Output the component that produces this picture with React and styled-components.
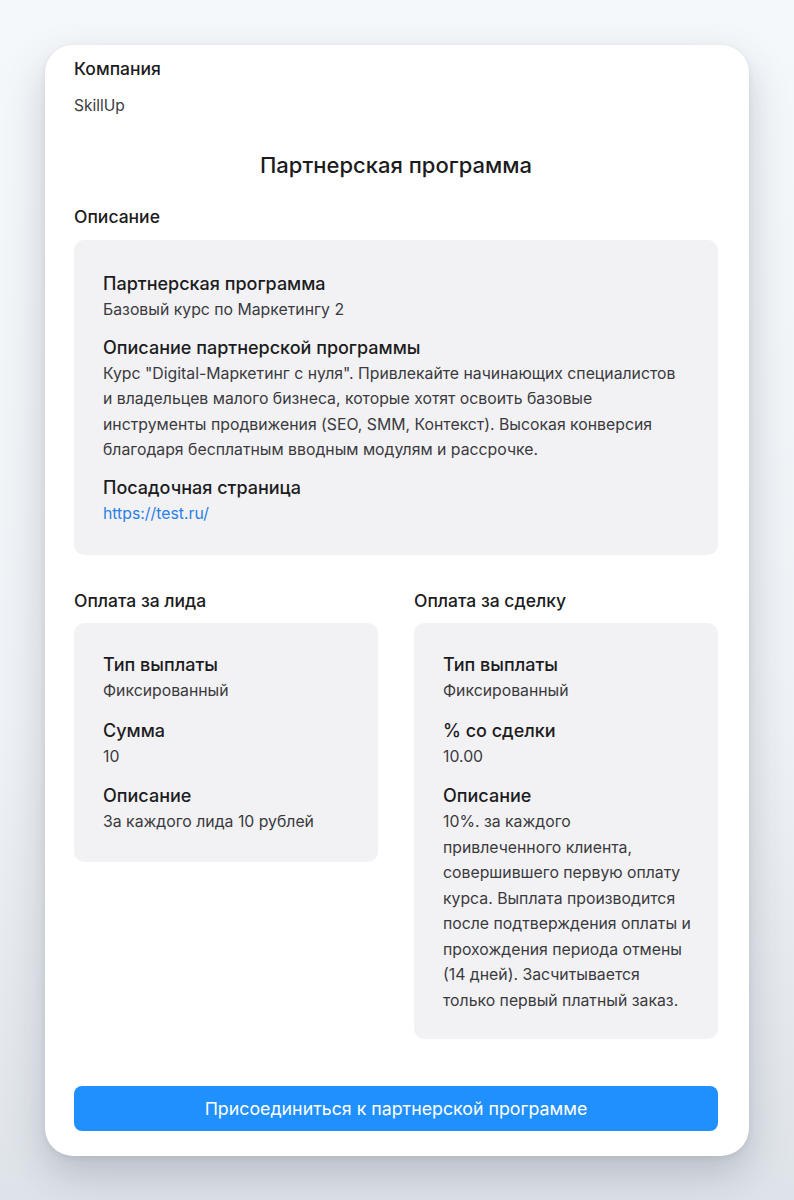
import React from 'react';
import styled, { createGlobalStyle } from 'styled-components';

const GlobalStyle = createGlobalStyle`
  html, body {
    margin: 0;
    padding: 0;
  }
  body {
    background: linear-gradient(180deg, #f5f8fb 0%, #eef1f5 60%, #dee3e9 100%);
    font-family: Inter, "Noto Sans", "Liberation Sans", sans-serif;
    color: #1c1c1e;
    -webkit-font-smoothing: antialiased;
  }
`;

const Page = styled.div`
  min-height: 1200px;
  padding: 45px;
  box-sizing: border-box;
`;

const Card = styled.div`
  background: #ffffff;
  border-radius: 28px;
  box-shadow: 0 18px 40px rgba(40, 52, 70, 0.22), 0 2px 6px rgba(40, 52, 70, 0.08);
  padding: 13px 31px 25px 29px;
  display: flex;
  flex-direction: column;
`;

const Heading = styled.div`
  font-size: 17.5px;
  line-height: 22px;
  font-weight: 500;
  color: #1c1c1e;
  margin-top: ${({ $top }) => $top || 0}px;
`;

const Company = styled.div`
  font-size: 15.5px;
  line-height: 20px;
  color: #3c3c40;
  margin-top: 16px;
`;

const Title = styled.h1`
  margin: 35px 0 0;
  font-size: 22px;
  line-height: 28px;
  font-weight: 500;
  text-align: center;
  color: #1c1c1e;
`;

const Panel = styled.div`
  background: #f2f2f4;
  border-radius: 10px;
  padding: ${({ $pad }) => $pad || '31px 29px 27px'};
  margin-top: ${({ $top }) => $top ?? 12}px;
  display: flex;
  flex-direction: column;
  gap: ${({ $gap }) => $gap || 16}px;
`;

const Field = styled.div`
  display: flex;
  flex-direction: column;
`;

const Label = styled.div`
  font-size: 18px;
  line-height: 22px;
  font-weight: 500;
  color: #1c1c1e;
`;

const Value = styled.div`
  margin-top: 2px;
  font-size: 15.8px;
  line-height: 25.5px;
  color: #3a3a3e;
`;

const Line = styled.span`
  display: block;
  white-space: nowrap;
`;

const Link = styled.a`
  color: #2a7fe6;
  text-decoration: none;
`;

const Columns = styled.div`
  display: grid;
  grid-template-columns: minmax(0, 1fr) minmax(0, 1fr);
  column-gap: 36px;
  margin-top: 35px;
  align-items: start;
`;

const Column = styled.div`
  display: flex;
  flex-direction: column;
`;

const JoinButton = styled.button`
  margin-top: 47px;
  height: 45px;
  border: none;
  border-radius: 8px;
  background: #2190ff;
  color: #ffffff;
  font-family: inherit;
  font-size: 17.8px;
  font-weight: 400;
  cursor: pointer;
`;

const Lines = ({ lines }) => (
  <Value>
    {lines.map((l, i) => (
      <Line key={i}>{l}</Line>
    ))}
  </Value>
);

const leadFields = [
  { label: 'Тип выплаты', value: 'Фиксированный' },
  { label: 'Сумма', value: '10' },
  { label: 'Описание', value: 'За каждого лида 10 рублей' },
];

const dealFields = [
  { label: 'Тип выплаты', value: 'Фиксированный' },
  { label: '% со сделки', value: '10.00' },
  {
    label: 'Описание',
    lines: [
      '10%. за каждого',
      'привлеченного клиента,',
      'совершившего первую оплату',
      'курса. Выплата производится',
      'после подтверждения оплаты и',
      'прохождения периода отмены',
      '(14 дней). Засчитывается',
      'только первый платный заказ.',
    ],
  },
];

const FieldList = ({ fields }) =>
  fields.map((f) => (
    <Field key={f.label}>
      <Label>{f.label}</Label>
      {f.lines ? <Lines lines={f.lines} /> : <Value>{f.value}</Value>}
    </Field>
  ));

export default function App() {
  return (
    <>
      <GlobalStyle />
      <Page>
        <Card>
          <Heading>Компания</Heading>
          <Company>SkillUp</Company>
          <Title>Партнерская программа</Title>
          <Heading $top={27}>Описание</Heading>
          <Panel $pad="33px 29px 29px" $gap={14}>
            <Field>
              <Label>Партнерская программа</Label>
              <Value>Базовый курс по Маркетингу 2</Value>
            </Field>
            <Field>
              <Label>Описание партнерской программы</Label>
              <Lines
                lines={[
                  'Курс "Digital-Маркетинг с нуля". Привлекайте начинающих специалистов',
                  'и владельцев малого бизнеса, которые хотят освоить базовые',
                  'инструменты продвижения (SEO, SMM, Контекст). Высокая конверсия',
                  'благодаря бесплатным вводным модулям и рассрочке.',
                ]}
              />
            </Field>
            <Field>
              <Label>Посадочная страница</Label>
              <Value>
                <Link href="#">https://test.ru/</Link>
              </Value>
            </Field>
          </Panel>
          <Columns>
            <Column>
              <Heading>Оплата за лида</Heading>
              <Panel $top={11}>
                <FieldList fields={leadFields} />
              </Panel>
            </Column>
            <Column>
              <Heading>Оплата за сделку</Heading>
              <Panel $top={11} $pad="31px 29px 26px">
                <FieldList fields={dealFields} />
              </Panel>
            </Column>
          </Columns>
          <JoinButton>Присоединиться к партнерской программе</JoinButton>
        </Card>
      </Page>
    </>
  );
}
